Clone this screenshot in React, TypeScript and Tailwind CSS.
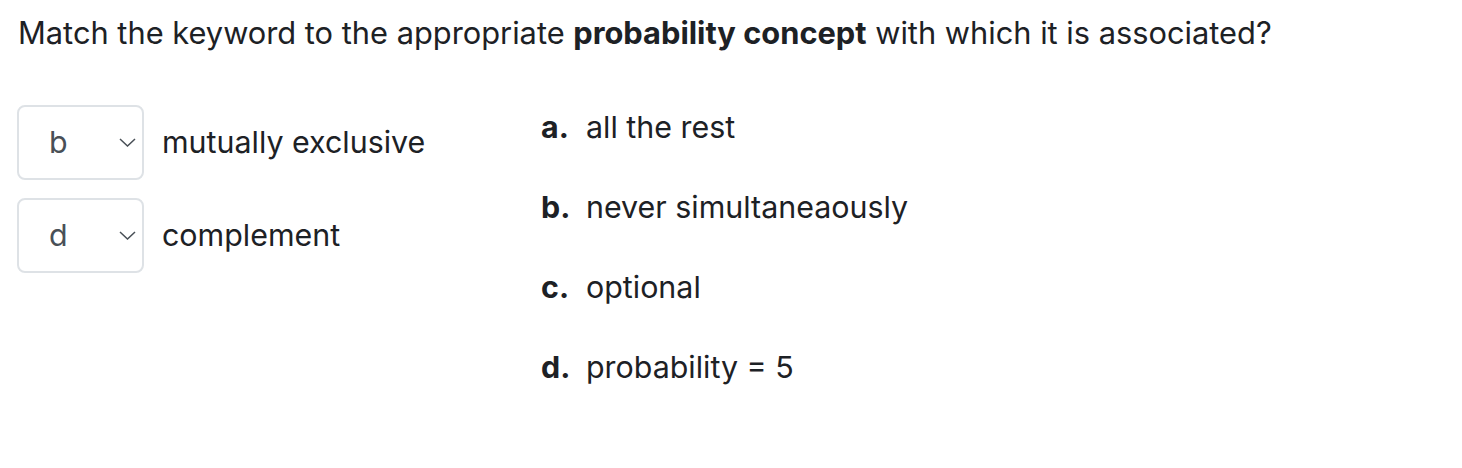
export default function App() {
  const rows = [
    { value: 'b', label: 'mutually exclusive' },
    { value: 'd', label: 'complement' },
  ]
  const answers = [
    { key: 'a.', text: 'all the rest' },
    { key: 'b.', text: 'never simultaneaously' },
    { key: 'c.', text: 'optional' },
    { key: 'd.', text: 'probability = 5' },
  ]

  return (
    <div className="min-h-[468px] bg-white pl-[18px] pt-[10px] text-[30.4px] leading-[45px] text-[#1d2125] font-['Inter','Liberation_Sans',Arial,sans-serif]">
      <p className="text-[30.8px]">
        Match the keyword to the appropriate <b>probability concept</b> with which it is associated?
      </p>
      <div className="mt-[50px] flex">
        <div className="w-[523px] flex flex-col gap-[18px]">
          {rows.map(r => (
            <div key={r.value} className="flex items-center gap-[18px]">
              <div className="w-[127px] h-[75px] -ml-[1px] border-2 border-[#dee2e6] rounded-[8px] flex items-center pl-[30px] pr-[6px] text-[#495057]">
                <span className="flex-1">{r.value}</span>
                <svg width="17" height="9" viewBox="0 0 17 9" fill="none">
                  <path d="M1 1 L8.5 8 L16 1" stroke="#495057" strokeWidth="1.5" />
                </svg>
              </div>
              <span>{r.label}</span>
            </div>
          ))}
        </div>
        <div className="flex flex-col gap-[35px]">
          {answers.map(a => (
            <div key={a.key} className="flex">
              <b className="w-[45px]">{a.key}</b>
              <span>{a.text}</span>
            </div>
          ))}
        </div>
      </div>
    </div>
  )
}
